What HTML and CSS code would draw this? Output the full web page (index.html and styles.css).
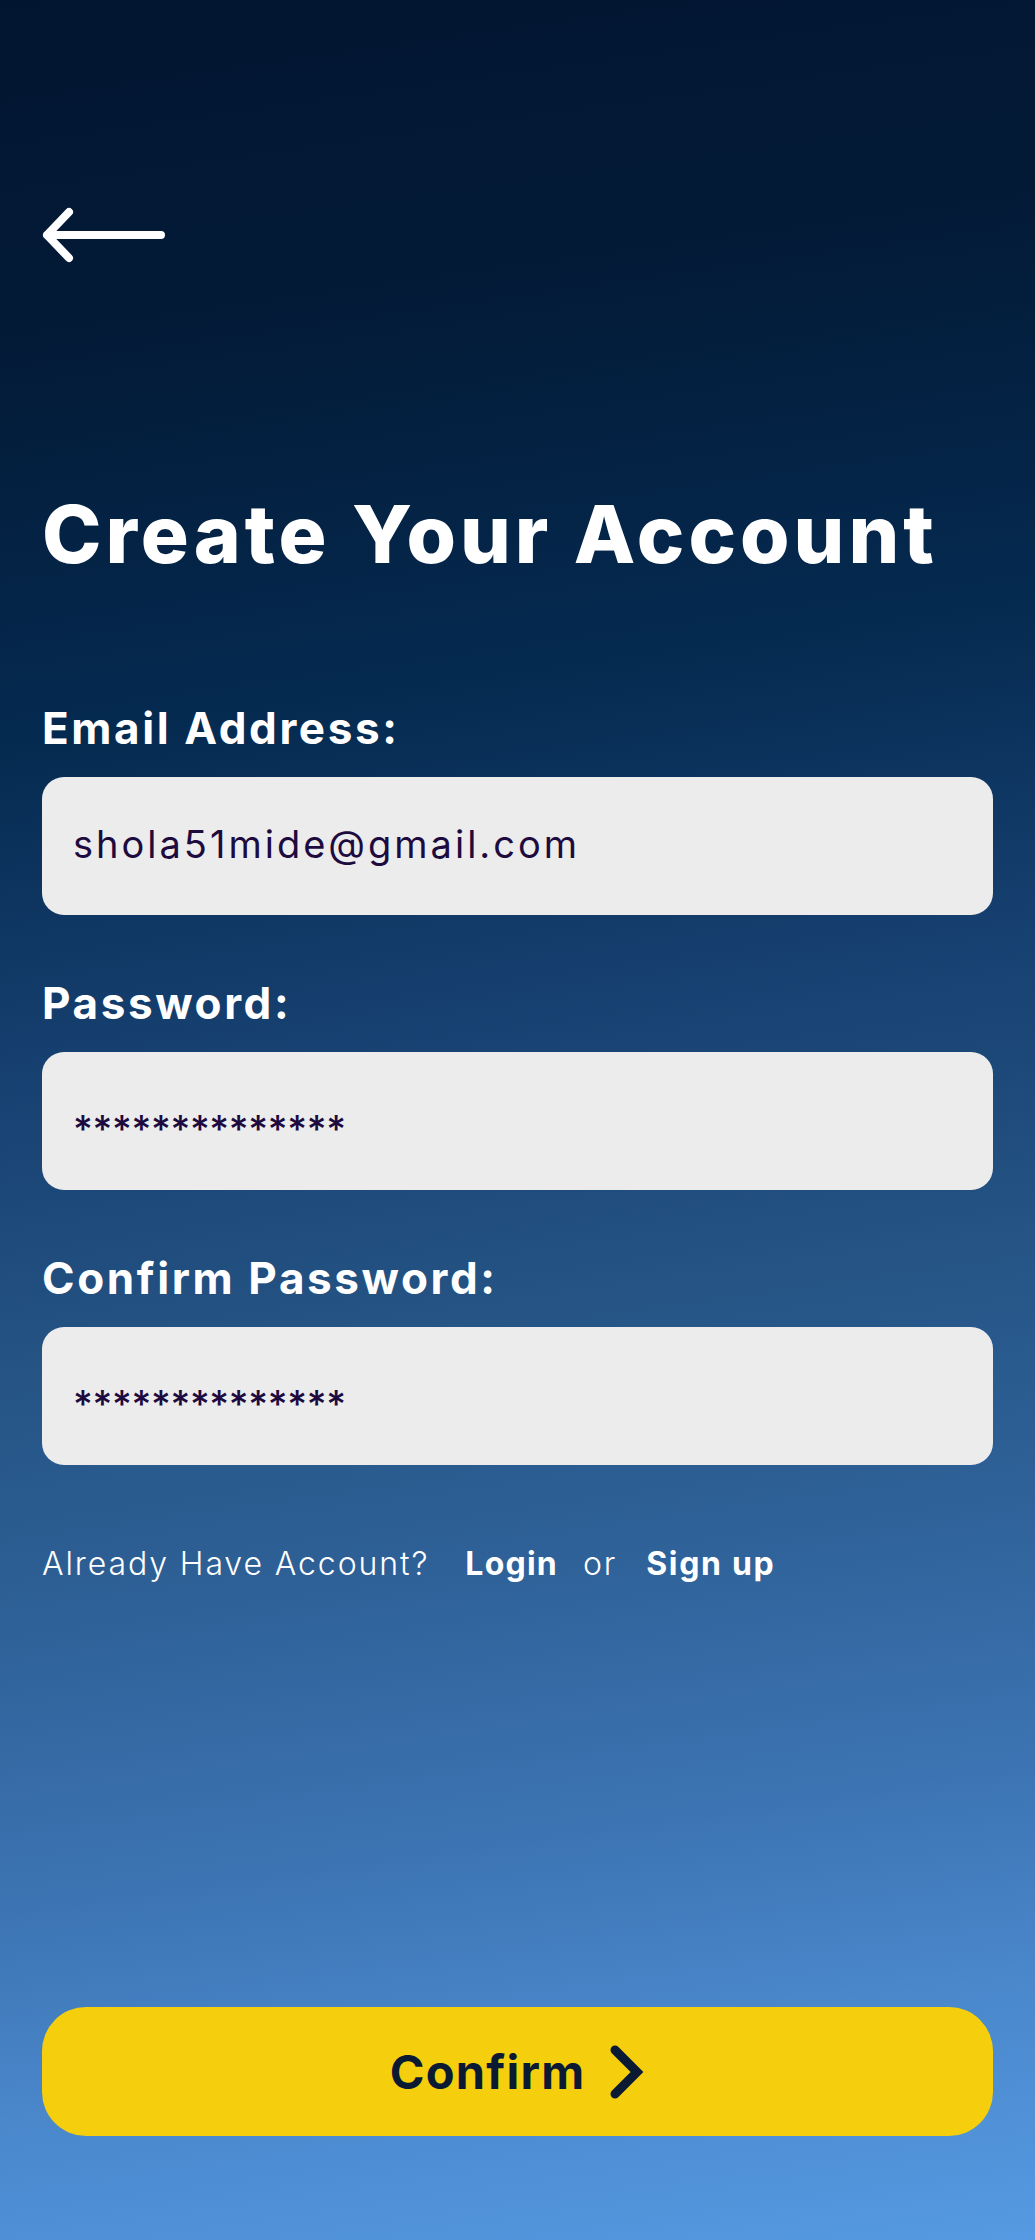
FILE: index.html
```html
<!DOCTYPE html>
<html lang="en">
<head>
<meta charset="utf-8">
<title>Create Your Account</title>
<link rel="stylesheet" href="styles.css">
</head>
<body>
<main class="screen">
  <a class="back" href="#" aria-label="Back">
    <svg width="135" height="70" viewBox="0 0 135 70" aria-hidden="true">
      <path d="M27 12 L5 35 L27 58 M5 35 L119 35" fill="none" stroke="#ffffff" stroke-width="8" stroke-linecap="round" stroke-linejoin="round"/>
    </svg>
  </a>

  <h1 class="title">Create Your Account</h1>

  <form class="form">
    <div class="field">
      <label class="label">Email Address:</label>
      <div class="input"><span class="value">shola51mide@gmail.com</span></div>
    </div>
    <div class="field">
      <label class="label">Password:</label>
      <div class="input"><span class="stars">**************</span></div>
    </div>
    <div class="field">
      <label class="label">Confirm Password:</label>
      <div class="input"><span class="stars">**************</span></div>
    </div>
  </form>

  <p class="links">
    <span class="muted">Already Have Account?</span>
    <a class="link link-login" href="#">Login</a>
    <span class="muted">or</span>
    <a class="link link-signup" href="#">Sign up</a>
  </p>

  <button class="confirm" type="button">
    <span>Confirm</span>
    <svg width="38" height="54" viewBox="0 0 38 54" aria-hidden="true">
      <path d="M8 5 L30 27 L8 49" fill="none" stroke="#0b1a33" stroke-width="9" stroke-linecap="round" stroke-linejoin="miter"/>
    </svg>
  </button>
</main>
</body>
</html>
```

FILE: styles.css
```css
html, body {
  margin: 0;
  padding: 0;
}

body {
  font-family: "Inter", "Noto Sans", sans-serif;
  background: #021530;
}

.screen {
  box-sizing: border-box;
  width: 1035px;
  min-height: 2240px;
  padding: 200px 42px 104px;
  display: flex;
  flex-direction: column;
  background: linear-gradient(172deg,
    #021530 0%,
    #031b38 15%,
    #052a50 31%,
    #164070 45%,
    #255485 58%,
    #2f6299 69%,
    #3c74b3 80%,
    #4a87cb 89%,
    #559ae2 100%);
}

.back {
  display: block;
  width: 135px;
  height: 70px;
}

.back svg {
  display: block;
}

.title {
  margin: 224px 0 0;
  font-size: 80px;
  line-height: 80px;
  font-weight: 800;
  letter-spacing: 4px;
  color: #ffffff;
}

.form {
  margin-top: 128px;
  display: flex;
  flex-direction: column;
  gap: 62px;
}

.field {
  display: flex;
  flex-direction: column;
}

.label {
  font-size: 44px;
  line-height: 52px;
  font-weight: 700;
  letter-spacing: 2.6px;
  color: #ffffff;
  margin-bottom: 23px;
}

.input {
  box-sizing: border-box;
  height: 138px;
  border-radius: 22px;
  background: #ececec;
  padding: 0 31px;
  display: flex;
  align-items: center;
}

.value {
  font-size: 38px;
  line-height: 38px;
  font-weight: 400;
  letter-spacing: 3px;
  color: #1d0b3f;
  margin-bottom: 4px;
}

.stars {
  font-size: 38px;
  line-height: 38px;
  font-weight: 500;
  letter-spacing: -0.3px;
  color: #1d0b3f;
  margin-top: 16px;
}

.links {
  margin: 79px 0 0;
  display: flex;
  align-items: baseline;
  font-size: 32px;
  line-height: 40px;
  color: #ffffff;
}

.muted {
  font-weight: 300;
  letter-spacing: 1.9px;
}

.link {
  font-weight: 700;
  color: #ffffff;
  text-decoration: none;
  letter-spacing: 1.2px;
}

.link-login {
  margin: 0 25px 0 36px;
}

.link-signup {
  margin-left: 29px;
  letter-spacing: 1.7px;
}

.confirm {
  margin-top: auto;
  height: 129px;
  width: 100%;
  border: none;
  border-radius: 44px;
  background: #f5ce0d;
  display: flex;
  align-items: center;
  justify-content: center;
  gap: 22px;
  font-family: "Inter", "Noto Sans", sans-serif;
  font-size: 47px;
  font-weight: 700;
  letter-spacing: 1.2px;
  color: #0b1a33;
  padding: 0;
}

.confirm svg {
  display: block;
}
```
